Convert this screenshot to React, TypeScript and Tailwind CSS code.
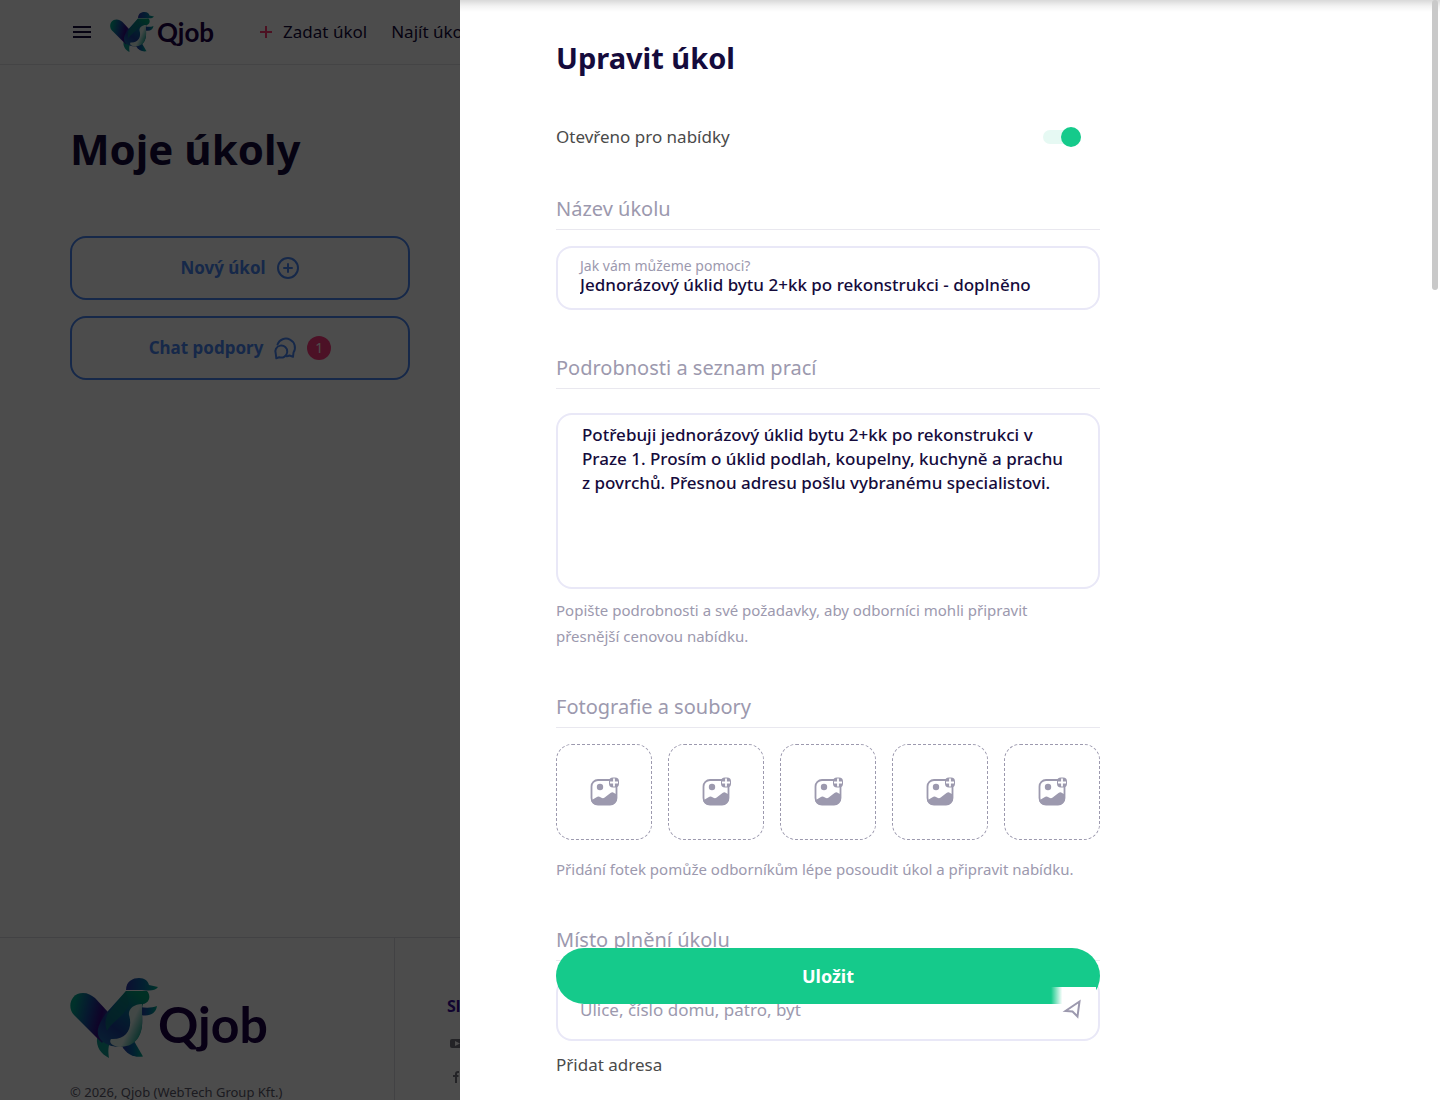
import { useId, useState } from 'react'

type IconProps = { className?: string }

function Bird({ className }: IconProps) {
  const id = useId()
  return (
    <svg viewBox="0 0 88 80" className={className} aria-hidden="true">
      <defs>
        <linearGradient id={`${id}wing`} gradientUnits="userSpaceOnUse" x1="2" y1="34" x2="46" y2="44">
          <stop offset="0" stopColor="#00a68e" />
          <stop offset="0.35" stopColor="#16509f" />
          <stop offset="0.65" stopColor="#350a86" />
          <stop offset="1" stopColor="#1b70b0" />
        </linearGradient>
        <linearGradient id={`${id}body`} gradientUnits="userSpaceOnUse" x1="74" y1="16" x2="36" y2="68">
          <stop offset="0.05" stopColor="#00a078" />
          <stop offset="0.4" stopColor="#0a6a9c" />
          <stop offset="0.7" stopColor="#1b3f9c" />
          <stop offset="1" stopColor="#1d6bab" />
        </linearGradient>
        <linearGradient id={`${id}cap`}>
          <stop offset="0" stopColor="#2a33a6" />
          <stop offset="0.5" stopColor="#0a66a6" />
          <stop offset="1" stopColor="#00ad8c" />
        </linearGradient>
        <linearGradient id={`${id}belly`} gradientUnits="userSpaceOnUse" x1="56" y1="46" x2="73" y2="54">
          <stop offset="0.25" stopColor="#dcf0ec" />
          <stop offset="1" stopColor="#16a48f" />
        </linearGradient>
      </defs>
      <path d="M52 68L64 63L73 78.500C64 80 56 76 52 68Z" fill={`url(#${id}cap)`} />
      <path d="M27 60L41 62C38 68 38 73 39 80C31 76 26 69 27 60Z" fill="#0f9b92" />
      <path d="M70 29C76 30 82 30 87 28C86 35 80 39 71 37Z" fill={`url(#${id}cap)`} />
      <path d="M4 37C-3 30 0 15 13 15C18 15 21 17 25 20L38 34L44 50L32 65Z" fill={`url(#${id}wing)`} />
      <path
        d="M56 13L77 13C81 17 80 25 73 26C71 31 73 39 72 48C70 61 62 69 50 69C37 69 26 62 28 51C29 46 33 39 38 33Z"
        fill={`url(#${id}body)`}
      />
      <path d="M56 13L40 33C34 41 35 47 37 53C43 42 55 39 59 25Z" fill="#08807f" opacity="0.7" />
      <path d="M72 26C64 26 58 31 59 37C63 50 57 62 41 61C38 65 44 69 51 69C68 68 73 55 72 41Z" fill={`url(#${id}belly)`} />
      <path d="M56 12C56 3 63 0 69 0C75 0 78 3 79 7L88 9C85 13 80 13 72 12Z" fill={`url(#${id}cap)`} />
    </svg>
  )
}

function PhotoIcon() {
  return (
    <svg viewBox="0 0 30 30" className="size-[30px] text-[#9c99ae]" aria-hidden="true">
      <rect x="2.500" y="3" width="25" height="24.500" rx="6.500" fill="none" stroke="currentColor" strokeWidth="1.800" />
      <path
        d="M2 23.500L7.500 20.200Q9.500 19 11.500 20.300L13 21Q14.500 21.500 16 20.300L21.500 16Q23.500 14.500 25 16L28 17.500V21.500A7 7 0 0 1 21 28H9A7 7 0 0 1 2 23.500Z"
        fill="currentColor"
      />
      <circle cx="11" cy="10" r="3.2" fill="currentColor" />
      <rect x="20" y="0.500" width="10" height="10" rx="4" fill="currentColor" />
      <path d="M25 1.500V9.500M21 5.500H29" stroke="#fff" strokeWidth="1.800" />
    </svg>
  )
}

function PlusCircleIcon() {
  return (
    <svg viewBox="0 0 24 24" className="size-6" fill="none" stroke="currentColor" strokeWidth="2" strokeLinecap="round" aria-hidden="true">
      <circle cx="12" cy="12" r="10" />
      <path d="M12 8V16M8 12H16" />
    </svg>
  )
}

function ChatIcon() {
  return (
    <svg viewBox="0 0 24 24" className="size-6" fill="none" stroke="currentColor" strokeWidth="2" strokeLinejoin="round" strokeLinecap="round" aria-hidden="true">
      <path d="M4.500 8.500A9 9 0 1 1 20.500 16.500L20 20.800L16.500 19.500C15 20.200 14 20.300 13 20" />
      <path d="M2.800 18L3.300 22.300L6.300 21.200A6 6 0 1 0 2.800 18Z" />
    </svg>
  )
}

function Logo({ large = false }: { large?: boolean }) {
  return (
    <a href="#" className="flex shrink-0 items-start text-[#1b0046]" aria-label="Qjob">
      <Bird className={large ? 'h-20 w-[88px]' : 'h-10 w-11'} />
      <span
        className={
          large
            ? "pt-4 font-['Lato'] text-[50px] leading-[60px] font-bold"
            : "pt-1 pl-[3px] font-['Lato'] text-[26px] leading-8 font-bold"
        }
      >
        Qjob
      </span>
    </a>
  )
}

function SectionTitle({ children }: { children: string }) {
  return (
    <h2 className="border-b border-[#e9e8ef] pb-1.5 text-xl leading-7 text-[#9c99ae]">{children}</h2>
  )
}

function MyTasksPage() {
  return (
    <div className="flex h-full flex-col bg-white">
      <header className="flex h-[65px] shrink-0 items-center border-b border-[#e3e3e8] px-[70px] whitespace-nowrap">
        <button type="button" aria-label="Menu" className="mr-4 flex size-6 flex-col items-center justify-center gap-[3px]">
          <span className="h-0.5 w-[18px] bg-[#150b3c]" />
          <span className="h-0.5 w-[18px] bg-[#150b3c]" />
          <span className="h-0.5 w-[18px] bg-[#150b3c]" />
        </button>
        <Logo />
        <nav className="ml-[46px] flex items-center gap-6 text-[17px]">
          <a href="#" className="flex items-center gap-[11px]">
            <svg viewBox="0 0 12 12" className="size-3" stroke="#ff3b74" strokeWidth="2" aria-hidden="true">
              <path d="M6 0V12M0 6H12" />
            </svg>
            Zadat úkol
          </a>
          <a href="#">Najít úkoly</a>
        </nav>
      </header>

      <main className="grow px-[70px] pt-[54px]">
        <h1 className="text-[42px] leading-[60px] font-bold">Moje úkoly</h1>
        <div className="mt-[57px] flex max-w-[340px] flex-col gap-4 text-[17px] font-bold text-[#4b88f5]">
          <button type="button" className="flex h-16 items-center justify-center gap-2.5 rounded-2xl border-2 border-[#4b88f5]">
            Nový úkol
            <PlusCircleIcon />
          </button>
          <button type="button" className="flex h-16 items-center justify-center gap-2.5 rounded-2xl border-2 border-[#4b88f5]">
            Chat podpory
            <ChatIcon />
            <span className="flex size-6 items-center justify-center rounded-full bg-[#ff3b7f] text-sm font-normal text-white">1</span>
          </button>
        </div>
      </main>

      <footer className="flex h-[163px] shrink-0 overflow-hidden border-t border-[#dcdce4] pl-[70px]">
        <div className="w-[325px] shrink-0 border-r border-[#dcdce4] pt-10">
          <Logo large />
          <p className="mt-6 text-[13px] leading-5 text-[#5d5a6c]">© 2026, Qjob (WebTech Group Kft.)</p>
        </div>
        <div className="pt-14 pl-[52px]">
          <h2 className="text-base leading-6 font-bold text-[#3a0a9e]">Sledujte nás</h2>
          <a href="#" aria-label="YouTube" className="mt-5 block">
            <svg viewBox="0 0 18 12" className="h-3 w-[18px]" aria-hidden="true">
              <rect x="3" y="1" width="14" height="9" rx="2" fill="#77757f" />
              <path d="M8 3L13 5.500L8 8Z" fill="#fff" />
            </svg>
          </a>
          <a href="#" aria-label="Facebook" className="mt-5 block text-[#77757f]">
            <svg viewBox="0 0 18 14" className="h-3.5 w-[18px]" aria-hidden="true">
              <path d="M12 2H11Q9 2 9 4V13M6 6H11.500" fill="none" stroke="currentColor" strokeWidth="2" />
            </svg>
          </a>
        </div>
      </footer>
    </div>
  )
}

function EditTaskDrawer() {
  const [open, setOpen] = useState(true)
  const [title, setTitle] = useState('Jednorázový úklid bytu 2+kk po rekonstrukci - doplněno')
  const [details, setDetails] = useState(
    'Potřebuji jednorázový úklid bytu 2+kk po rekonstrukci v Praze 1. Prosím o úklid podlah, koupelny, kuchyně a prachu z povrchů. Přesnou adresu pošlu vybranému specialistovi.'
  )

  return (
    <aside className="fixed inset-y-0 right-0 left-[460px] overflow-hidden bg-white px-24">
      <div className="absolute inset-x-0 top-0 h-3 bg-linear-to-b from-black/15 via-black/5 to-transparent" />
      <div className="absolute top-0 right-0.5 h-[290px] w-1.5 rounded-full bg-[#c9c9c9]" />

      <form className="max-w-[544px] pt-10" onSubmit={(e) => e.preventDefault()}>
        <h1 className="text-[29px] leading-9 font-bold">Upravit úkol</h1>

        <label className="mt-[49px] flex h-6 items-center justify-between pr-[19px] text-[17px] text-[#4a4a4a]">
          Otevřeno pro nabídky
          <span className="relative flex h-5 w-[38px] items-center">
            <input
              type="checkbox"
              checked={open}
              onChange={(e) => setOpen(e.target.checked)}
              className="peer h-3.5 w-full appearance-none rounded-full bg-[#e6f9f3]"
            />
            <span className="pointer-events-none absolute left-0 size-5 rounded-full bg-[#9c99ae] peer-checked:right-0 peer-checked:left-auto peer-checked:bg-[#15ca8b]" />
          </span>
        </label>

        <section className="mt-[46px]">
          <SectionTitle>Název úkolu</SectionTitle>
          <label className="mt-4 flex h-16 flex-col justify-center rounded-2xl border-2 border-[#e9e8f7] px-[22px] pb-1">
            <span className="text-sm leading-[18px] text-[#9c99ae]">Jak vám můžeme pomoci?</span>
            <input
              value={title}
              onChange={(e) => setTitle(e.target.value)}
              className="h-5 w-full text-[17px] font-medium outline-none"
            />
          </label>
        </section>

        <section className="mt-11">
          <SectionTitle>Podrobnosti a seznam prací</SectionTitle>
          <textarea
            aria-label="Podrobnosti a seznam prací"
            value={details}
            onChange={(e) => setDetails(e.target.value)}
            className="mt-6 block h-44 w-full resize-none rounded-2xl border-2 border-[#e9e8f7] py-2 pr-7 pl-6 text-[17px] leading-6 font-medium outline-none"
          />
          <p className="mt-2 pr-6 text-[15px] leading-[26px] text-[#9c99ae]">
            Popište podrobnosti a své požadavky, aby odborníci mohli připravit přesnější cenovou nabídku.
          </p>
        </section>

        <section className="mt-11">
          <SectionTitle>Fotografie a soubory</SectionTitle>
          <div className="mt-4 flex gap-4">
            {[1, 2, 3, 4, 5].map((n) => (
              <button
                key={n}
                type="button"
                aria-label={`Přidat fotografii ${n}`}
                className="flex size-24 items-center justify-center rounded-2xl border border-dashed border-[#9c99ae]"
              >
                <PhotoIcon />
              </button>
            ))}
          </div>
          <p className="mt-4 text-[15px] leading-[26px] text-[#9c99ae]">
            Přidání fotek pomůže odborníkům lépe posoudit úkol a připravit nabídku.
          </p>
        </section>

        <section className="mt-11">
          <SectionTitle>Místo plnění úkolu</SectionTitle>
          <div className="relative mt-4">
            <input
              aria-label="Adresa"
              placeholder="Ulice, číslo domu, patro, byt"
              className="block h-16 w-full rounded-2xl border-2 border-[#e9e8f7] pr-12 pl-[22px] text-[17px] outline-none placeholder:text-[#9c99ae]"
            />
            <button
              type="button"
              aria-label="Moje poloha"
              className="absolute top-2.5 right-1 z-20 flex h-11 w-[45px] items-center justify-end bg-linear-to-r from-transparent to-white to-25% pr-3.5"
            >
              <svg viewBox="0 0 20 20" className="size-5" fill="none" stroke="#9c99ae" strokeWidth="2" aria-hidden="true">
                <path d="M17.500 2.500L3.500 12L10.500 12.500L15.500 17.500Z" />
              </svg>
            </button>
          </div>
          <button type="button" className="mt-3 text-[17px] leading-6 text-[#4a4a4a]">
            Přidat adresa
          </button>
        </section>

        <div className="absolute inset-x-24 bottom-24 z-10">
          <button type="submit" className="h-14 w-full max-w-[544px] rounded-full bg-[#15ca8b] text-lg font-bold text-white">
            Uložit
          </button>
        </div>
      </form>
    </aside>
  )
}

export default function App() {
  return (
    <div className="h-screen overflow-hidden font-['Noto_Sans',sans-serif] text-[#150b3c]">
      <MyTasksPage />
      <div className="fixed inset-0 bg-black/70" />
      <EditTaskDrawer />
    </div>
  )
}
